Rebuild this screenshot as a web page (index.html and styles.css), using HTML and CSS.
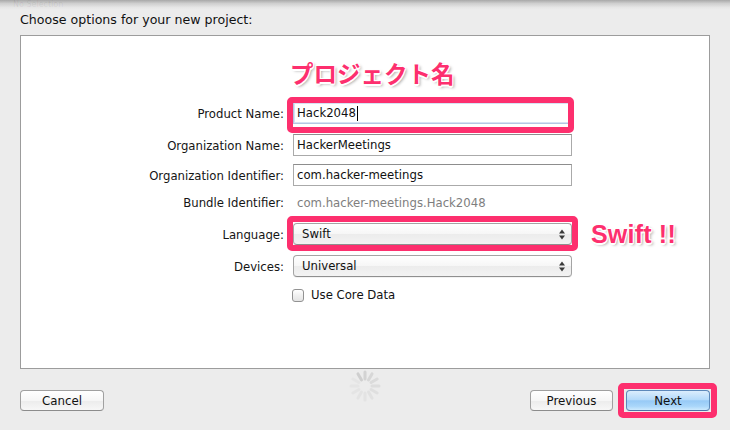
FILE: index.html
```html
<!DOCTYPE html>
<html lang="en">
<head>
<meta charset="utf-8">
<title>Choose options for your new project</title>
<link rel="stylesheet" href="styles.css">
</head>
<body>
<div class="topbar"><span class="ghost">No Selection</span></div>
<div class="heading">Choose options for your new project:</div>
<div class="panel">
  <div class="row title-row">
    <div></div>
    <div class="note note-title">プロジェクト名</div>
  </div>
  <div class="row r-product">
    <label class="lbl">Product Name:</label>
    <div class="ctrl">
      <div class="field focused">Hack2048<span class="caret"></span></div>
      <div class="mark mark-product"></div>
    </div>
  </div>
  <div class="row r-orgname">
    <label class="lbl">Organization Name:</label>
    <div class="ctrl"><div class="field">HackerMeetings</div></div>
  </div>
  <div class="row r-orgid">
    <label class="lbl">Organization Identifier:</label>
    <div class="ctrl"><div class="field">com.hacker-meetings</div></div>
  </div>
  <div class="row r-bundle">
    <label class="lbl">Bundle Identifier:</label>
    <div class="bundle">com.hacker-meetings.Hack2048</div>
  </div>
  <div class="row r-lang">
    <label class="lbl">Language:</label>
    <div class="ctrl">
      <div class="popup"><span>Swift</span>
        <svg class="arrows" width="6" height="11" viewBox="0 0 6 11"><polygon points="3,0.5 6,4.5 0,4.5" fill="#3a3a3a"/><polygon points="0,6.5 6,6.5 3,10.5" fill="#3a3a3a"/></svg>
      </div>
      <div class="mark mark-lang"></div>
    </div>
    <div class="note note-swift">Swift !!</div>
  </div>
  <div class="row r-devices">
    <label class="lbl">Devices:</label>
    <div class="ctrl">
      <div class="popup"><span>Universal</span>
        <svg class="arrows" width="6" height="11" viewBox="0 0 6 11"><polygon points="3,0.5 6,4.5 0,4.5" fill="#3a3a3a"/><polygon points="0,6.5 6,6.5 3,10.5" fill="#3a3a3a"/></svg>
      </div>
    </div>
  </div>
  <div class="row r-check">
    <div></div>
    <div class="checkline"><span class="checkbox"></span><span>Use Core Data</span></div>
  </div>
</div>
<div class="footer">
  <div class="left"><div class="btn btn-cancel">Cancel</div></div>
  <svg class="spinner" width="32" height="32" viewBox="-16 -16 32 32">
    <g stroke="#c4c4c4" stroke-width="3" stroke-linecap="round">
      <line x1="0" y1="-7" x2="0" y2="-14" opacity="0.6"/>
      <line x1="0" y1="-7" x2="0" y2="-14" opacity="0.5" transform="rotate(30)"/>
      <line x1="0" y1="-7" x2="0" y2="-14" opacity="0.42" transform="rotate(60)"/>
      <line x1="0" y1="-7" x2="0" y2="-14" opacity="0.35" transform="rotate(90)"/>
      <line x1="0" y1="-7" x2="0" y2="-14" opacity="0.3" transform="rotate(120)"/>
      <line x1="0" y1="-7" x2="0" y2="-14" opacity="0.26" transform="rotate(150)"/>
      <line x1="0" y1="-7" x2="0" y2="-14" opacity="0.22" transform="rotate(180)"/>
      <line x1="0" y1="-7" x2="0" y2="-14" opacity="0.2" transform="rotate(210)"/>
      <line x1="0" y1="-7" x2="0" y2="-14" opacity="0.18" transform="rotate(240)"/>
      <line x1="0" y1="-7" x2="0" y2="-14" opacity="0.16" transform="rotate(270)"/>
      <line x1="0" y1="-7" x2="0" y2="-14" opacity="0.15" transform="rotate(300)"/>
      <line x1="0" y1="-7" x2="0" y2="-14" opacity="0.7" transform="rotate(330)"/>
    </g>
  </svg>
  <div class="right">
    <div class="btn btn-prev">Previous</div>
    <div class="next-wrap">
      <div class="btn btn-next">Next</div>
      <div class="mark mark-next"></div>
    </div>
  </div>
</div>
</body>
</html>
```
FILE: styles.css
```css
html, body {
  margin: 0;
  padding: 0;
}
body {
  background: #ececec;
  font-family: "DejaVu Sans", "Noto Sans CJK JP", sans-serif;
  color: #111;
  width: 730px;
  height: 430px;
  overflow: hidden;
}
.topbar {
  height: 10px;
  overflow: hidden;
  padding-left: 13px;
  background: linear-gradient(#a8a8a8, #cfcfcf 35%, #e6e6e6 75%, #ececec);
}
.ghost {
  display: block;
  font-size: 8px;
  line-height: 10px;
  color: rgba(0, 0, 0, 0.07);
}
.heading {
  font-size: 12.6px;
  line-height: 16px;
  margin: 2px 0 7px 20px;
}
.panel {
  margin-left: 20px;
  width: 688px;
  height: 309px;
  padding-top: 23px;
  border: 1px solid #9c9c9c;
  background: #fff;
}
.row {
  display: grid;
  grid-template-columns: 263px 279px auto;
  column-gap: 9px;
  align-items: center;
  height: 22px;
}
.title-row { height: 28px; }
.r-product { margin-top: 15px; }
.r-orgname { margin-top: 10px; }
.r-orgid { margin-top: 8px; }
.r-bundle { margin-top: 5px; }
.r-lang { margin-top: 7px; }
.r-devices { margin-top: 13px; }
.r-check { margin-top: 7px; }

.lbl {
  text-align: right;
  font-size: 11.7px;
  color: #151515;
  padding-top: 2px;
}
.ctrl {
  position: relative;
  height: 22px;
}
.field {
  height: 22px;
  box-sizing: border-box;
  border: 1px solid #aaaaaa;
  border-top-color: #8d8d8d;
  background: #fff;
  font-size: 11.7px;
  padding-left: 3px;
  display: flex;
  align-items: center;
}
.field.focused {
  border-color: #b4c6e2;
  box-shadow: inset 0 0 0 1px #d6e2f3;
}
.caret {
  display: inline-block;
  width: 1px;
  height: 15px;
  background: #000;
  margin-left: 1px;
}
.bundle {
  font-size: 11.7px;
  color: #7e7e7e;
  padding-left: 4px;
  padding-top: 2px;
}
.popup {
  height: 22px;
  box-sizing: border-box;
  border: 1px solid #a4a4a4;
  border-bottom-color: #8f8f8f;
  border-radius: 4px;
  background: linear-gradient(#ffffff, #f6f6f6 50%, #ececec 52%, #f3f3f3);
  box-shadow: 0 1px 0 rgba(0, 0, 0, 0.05);
  display: flex;
  align-items: center;
  justify-content: space-between;
  padding: 0 6px 0 8px;
  font-size: 11.7px;
}
.arrows { display: block; }
.checkline {
  display: flex;
  align-items: center;
  gap: 7px;
  font-size: 11.7px;
  margin-left: -1px;
}
.checkbox {
  width: 12px;
  height: 13px;
  box-sizing: border-box;
  border: 1px solid #929292;
  border-radius: 3px;
  background: linear-gradient(#ffffff, #f0f0f0 50%, #e4e4e4);
}

.mark {
  position: absolute;
  border: 6px solid #fd2f6e;
  border-radius: 5px;
  pointer-events: none;
}
.mark-product { left: -6px; right: -2px; top: -5px; bottom: -9px; }
.mark-lang { left: -6px; right: -6px; top: -7px; bottom: -6px; }
.mark-next { left: -8px; right: -7px; top: -7px; bottom: -7px; }

.note {
  color: #fd2f6e;
  font-weight: bold;
  text-shadow: 1px 1px 0 #fff, -1px -1px 0 #fff, 1px -1px 0 #fff, -1px 1px 0 #fff,
    0 2px 0 #fff, 2px 2px 3px rgba(0, 0, 0, 0.35);
}
.note-title {
  font-family: "Noto Sans CJK JP", sans-serif;
  font-size: 23.5px;
  line-height: 28px;
  margin-left: -3px;
}
.note-swift {
  font-family: "Liberation Sans", Arial, sans-serif;
  font-size: 25px;
  line-height: 28px;
  margin-left: 10px;
  letter-spacing: 0.2px;
}

.footer {
  display: grid;
  grid-template-columns: 1fr auto 1fr;
  align-items: start;
  padding: 0 20px;
  margin-top: 2px;
}
.spinner { display: block; margin-top: -1px; }
.left, .right {
  display: flex;
  margin-top: 19px;
}
.right {
  justify-content: flex-end;
  gap: 13px;
}
.btn {
  height: 21px;
  box-sizing: border-box;
  border: 1px solid #a0a0a0;
  border-bottom-color: #8c8c8c;
  border-radius: 4px;
  background: linear-gradient(#ffffff, #f6f6f6 50%, #ececec 52%, #f7f7f7);
  font-size: 11.8px;
  display: flex;
  align-items: center;
  justify-content: center;
  color: #111;
}
.btn-cancel { width: 84px; }
.btn-prev { width: 83px; }
.next-wrap { position: relative; }
.btn-next {
  width: 84px;
  border-color: #5d88ba;
  border-bottom-color: #4a74a6;
  background: linear-gradient(#dbedfd, #b5dafa 45%, #97caf6 52%, #a9d6fa 80%, #cdeafe);
}
```
